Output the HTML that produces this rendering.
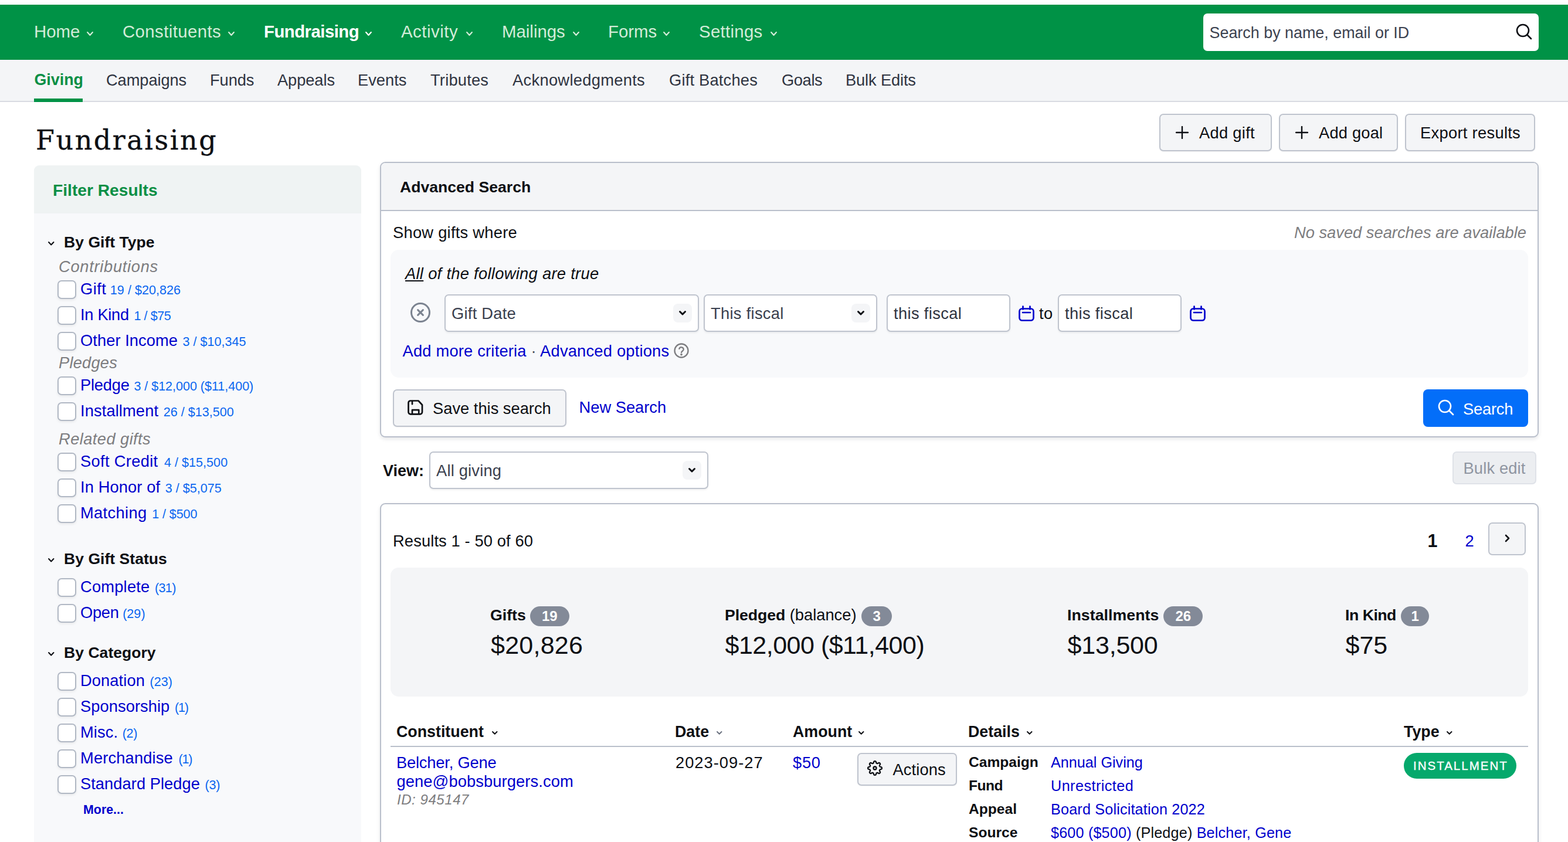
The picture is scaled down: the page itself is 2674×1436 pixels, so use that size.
<!DOCTYPE html>
<html lang="en">
<head>
<meta charset="utf-8">
<title>Fundraising</title>
<style>
*{box-sizing:border-box;margin:0;padding:0}
html,body{width:2674px;height:1436px;overflow:hidden;background:#fff}
body{position:relative;font-family:"Liberation Sans",sans-serif;font-size:27.3px;color:#0d0f14;line-height:1}
a{color:#0000cc;text-decoration:none}
.abs{position:absolute;white-space:nowrap}
svg{display:block}
b{font-size:26.7px}
#topbar{position:absolute;left:0;top:8px;width:2674px;height:94px;background:#009246}
.nav{position:absolute;top:0;height:94px;line-height:92px;font-size:29.4px;color:#d3ecd9;white-space:nowrap}
.nav.b{font-weight:bold;color:#fff}
#gsearch{position:absolute;left:2052px;top:15px;width:572px;height:64px;background:#fff;border-radius:7px}
#gsearch span{position:absolute;left:10.500px;top:0;line-height:66px;font-size:26.9px;color:#3c4250}
#gsearch svg{position:absolute;left:531.500px;top:15.500px}
#subnav{position:absolute;left:0;top:102px;width:2674px;height:72px;background:#f4f5f7;border-bottom:2px solid #d8dbe2}
.sn{position:absolute;top:0;height:70px;line-height:69px;font-size:27.3px;color:#2f3441;white-space:nowrap}
.sn.act{color:#0a8f45;font-weight:bold;font-size:26.8px;margin-left:.5px}
#snline{position:absolute;left:58px;top:66px;width:83px;height:6px;background:#009246}
#title{position:absolute;left:61px;top:207px;font-family:"DejaVu Serif","Liberation Serif",serif;font-size:46px;line-height:64px;color:#0d0f14;letter-spacing:2.55px;-webkit-text-stroke:.35px #0d0f14}
.btn{position:absolute;height:64px;border:2px solid #bfc4ce;border-radius:7px;background:#f4f5f7;color:#0d0f14;font-size:27.3px;line-height:61px;white-space:nowrap;box-shadow:0 1px 2px rgba(0,0,0,.05)}
.btn span{position:absolute;top:0}
#side{position:absolute;left:58px;top:282px;width:558px;height:1200px;background:#f8f9fb;border-radius:9px;overflow:hidden}
#sidehead{position:absolute;left:0;top:0;width:558px;height:82px;background:#eff3f3}
#sidehead span{position:absolute;left:32px;top:0;line-height:84px;font-size:28.2px;font-weight:bold;color:#0a8f45}
.gh{position:absolute;left:109px;font-weight:bold;font-size:26.6px;line-height:40px;white-space:nowrap}
.sub{position:absolute;left:100px;font-style:italic;color:#7d7d80;font-size:27.3px;line-height:40px;white-space:nowrap}
.cb{position:absolute;left:98px;width:32px;height:32px;border:2px solid #b1b8c4;border-radius:7px;background:#fff;box-shadow:0 2px 4px rgba(0,0,0,.07)}
.lb{position:absolute;left:137px;font-size:27.3px;line-height:40px;color:#0000cc;white-space:nowrap}
.lb small{font-size:21.6px;color:#0a66f0}
.panel{position:absolute;left:648px;width:1976px;border:2px solid #b9bfcb;border-radius:9px;background:#fff;box-shadow:0 3px 6px rgba(20,30,50,.10)}
.inp{position:absolute;height:64px;border:2px solid #bfc4ce;border-radius:7px;background:#fff;box-shadow:0 2px 3px rgba(0,0,0,.06);font-size:27.3px;line-height:62px;color:#2f3441;white-space:nowrap}
.inp.sel{color:#3a404e}
.inp span{position:absolute;left:10px;top:0}
.inp i{position:absolute;right:10px;top:14px;width:32px;height:32px;border-radius:8px;background:#f4f5f7}
.inp i svg{position:absolute;left:8px;top:10px}
.badge{display:inline-block;height:34px;line-height:34px;border-radius:17px;background:#838a98;color:#fff;font-weight:bold;font-size:24px;padding:0 20px;vertical-align:-1px;margin-left:-.5px}
  .sum{font-size:43px;line-height:54px;letter-spacing:.5px}
.th{position:absolute;top:1228px;font-weight:bold;font-size:26.8px;line-height:40px;white-space:nowrap}
.dl{position:absolute;left:1652px;font-weight:bold;font-size:24.6px;line-height:40px;white-space:nowrap}
.dv{position:absolute;left:1792px;font-size:25.2px;line-height:40px;white-space:nowrap;letter-spacing:.17px}
</style>
</head>
<body>
<div id="topbar">
<div class="nav" style="left:58px;letter-spacing:0px">Home</div>
<svg class="abs" style="left:146px;top:44px" width="15" height="11" viewBox="0 0 15 11" fill="none" stroke="#d3ecd9" stroke-width="2.2" stroke-linecap="round" stroke-linejoin="round"><path d="M3.1 3.1L7.5 7.9L11.9 3.1"/></svg>
<div class="nav" style="left:209px;letter-spacing:0.4px">Constituents</div>
<svg class="abs" style="left:387px;top:44px" width="15" height="11" viewBox="0 0 15 11" fill="none" stroke="#d3ecd9" stroke-width="2.2" stroke-linecap="round" stroke-linejoin="round"><path d="M3.1 3.1L7.5 7.9L11.9 3.1"/></svg>
<div class="nav b" style="left:450px;letter-spacing:-0.55px">Fundraising</div>
<svg class="abs" style="left:621px;top:44px" width="15" height="11" viewBox="0 0 15 11" fill="none" stroke="#fff" stroke-width="2.2" stroke-linecap="round" stroke-linejoin="round"><path d="M3.1 3.1L7.5 7.9L11.9 3.1"/></svg>
<div class="nav" style="left:684px;letter-spacing:0.5px">Activity</div>
<svg class="abs" style="left:793px;top:44px" width="15" height="11" viewBox="0 0 15 11" fill="none" stroke="#d3ecd9" stroke-width="2.2" stroke-linecap="round" stroke-linejoin="round"><path d="M3.1 3.1L7.5 7.9L11.9 3.1"/></svg>
<div class="nav" style="left:856px;letter-spacing:0px">Mailings</div>
<svg class="abs" style="left:975px;top:44px" width="15" height="11" viewBox="0 0 15 11" fill="none" stroke="#d3ecd9" stroke-width="2.2" stroke-linecap="round" stroke-linejoin="round"><path d="M3.1 3.1L7.5 7.9L11.9 3.1"/></svg>
<div class="nav" style="left:1037px;letter-spacing:0px">Forms</div>
<svg class="abs" style="left:1129px;top:44px" width="15" height="11" viewBox="0 0 15 11" fill="none" stroke="#d3ecd9" stroke-width="2.2" stroke-linecap="round" stroke-linejoin="round"><path d="M3.1 3.1L7.5 7.9L11.9 3.1"/></svg>
<div class="nav" style="left:1192px;letter-spacing:0.3px">Settings</div>
<svg class="abs" style="left:1312px;top:44px" width="15" height="11" viewBox="0 0 15 11" fill="none" stroke="#d3ecd9" stroke-width="2.2" stroke-linecap="round" stroke-linejoin="round"><path d="M3.1 3.1L7.5 7.9L11.9 3.1"/></svg>
<div id="gsearch"><span>Search by name, email or ID</span><svg width="30" height="30" viewBox="0 0 30 30" fill="none" stroke="#0d0f14" stroke-width="2.6" stroke-linecap="round"><circle cx="13" cy="13" r="10"/><path d="M20.500 20.500L27 27"/></svg></div>
</div>
<div id="subnav">
<div class="sn act" style="left:58px;letter-spacing:0px">Giving</div>
<div class="sn" style="left:181px;letter-spacing:-0.1px">Campaigns</div>
<div class="sn" style="left:358px;letter-spacing:-0.1px">Funds</div>
<div class="sn" style="left:473px;letter-spacing:-0.1px">Appeals</div>
<div class="sn" style="left:610px;letter-spacing:0px">Events</div>
<div class="sn" style="left:734px;letter-spacing:0.2px">Tributes</div>
<div class="sn" style="left:874px;letter-spacing:0.3px">Acknowledgments</div>
<div class="sn" style="left:1141px;letter-spacing:0.2px">Gift Batches</div>
<div class="sn" style="left:1333px;letter-spacing:-0.4px">Goals</div>
<div class="sn" style="left:1442px;letter-spacing:-0.15px">Bulk Edits</div>
<div id="snline"></div></div>
<div id="title">Fundraising</div>
<div class="btn" style="left:1977px;top:194px;width:192px"><svg style="position:absolute;left:26px;top:19px" width="22" height="22" viewBox="0 0 22 22" stroke="#0d0f14" stroke-width="2.4" stroke-linecap="round"><path d="M11 1v20M1 11h20"/></svg><span style="left:66px;letter-spacing:.3px">Add gift</span></div>
<div class="btn" style="left:2181px;top:194px;width:203px"><svg style="position:absolute;left:26px;top:19px" width="22" height="22" viewBox="0 0 22 22" stroke="#0d0f14" stroke-width="2.4" stroke-linecap="round"><path d="M11 1v20M1 11h20"/></svg><span style="left:66px;letter-spacing:.2px">Add goal</span></div>
<div class="btn" style="left:2396px;top:194px;width:222px"><span style="left:24px;letter-spacing:.3px">Export results</span></div>
<div id="side"><div id="sidehead"><span>Filter Results</span></div></div>
<svg class="abs" style="left:80px;top:409.5px" width="14.5" height="10.5" viewBox="0 0 14.5 10.5" fill="none" stroke="#0d0f14" stroke-width="2.1" stroke-linecap="round" stroke-linejoin="round"><path d="M3.05 3.05L7.25 7.45L11.45 3.05"/></svg>
<div class="gh" style="top:392.5px">By Gift Type</div>
<div class="sub" style="top:435px;letter-spacing:0.7px">Contributions</div>
<div class="cb" style="top:478px"></div><div class="lb" style="top:473px"><span style="letter-spacing:0.45px">Gift</span> <small style="letter-spacing:0px;margin-left:-1px">19 / $20,826</small></div>
<div class="cb" style="top:522px"></div><div class="lb" style="top:517px"><span style="letter-spacing:-0.3px">In Kind</span> <small style="letter-spacing:-0.45px;margin-left:1px">1 / $75</small></div>
<div class="cb" style="top:566px"></div><div class="lb" style="top:561px"><span style="letter-spacing:0.05px">Other Income</span> <small style="letter-spacing:0px;margin-left:1px">3 / $10,345</small></div>
<div class="sub" style="top:599px;letter-spacing:0.2px">Pledges</div>
<div class="cb" style="top:642px"></div><div class="lb" style="top:637px"><span style="letter-spacing:-0.2px">Pledge</span> <small style="letter-spacing:-0.05px;margin-left:0px">3 / $12,000 ($11,400)</small></div>
<div class="cb" style="top:686px"></div><div class="lb" style="top:681px"><span style="letter-spacing:0.1px">Installment</span> <small style="letter-spacing:0px;margin-left:1px">26 / $13,500</small></div>
<div class="sub" style="top:729px;letter-spacing:0.42px">Related gifts</div>
<div class="cb" style="top:772px"></div><div class="lb" style="top:767px"><span style="letter-spacing:0.32px">Soft Credit</span> <small style="letter-spacing:0px;margin-left:3px">4 / $15,500</small></div>
<div class="cb" style="top:816px"></div><div class="lb" style="top:811px"><span style="letter-spacing:0.1px">In Honor of</span> <small style="letter-spacing:0px;margin-left:1px">3 / $5,075</small></div>
<div class="cb" style="top:860px"></div><div class="lb" style="top:855px"><span style="letter-spacing:0.35px">Matching</span> <small style="letter-spacing:-0.1px;margin-left:1px">1 / $500</small></div>
<svg class="abs" style="left:80px;top:950px" width="14.5" height="10.5" viewBox="0 0 14.5 10.5" fill="none" stroke="#0d0f14" stroke-width="2.1" stroke-linecap="round" stroke-linejoin="round"><path d="M3.05 3.05L7.25 7.45L11.45 3.05"/></svg>
<div class="gh" style="top:933px">By Gift Status</div>
<div class="cb" style="top:986px"></div><div class="lb" style="top:981px"><span style="letter-spacing:0.2px">Complete</span> <small style="letter-spacing:-0.7px;margin-left:1px">(31)</small></div>
<div class="cb" style="top:1030px"></div><div class="lb" style="top:1025px"><span style="letter-spacing:-0.3px">Open</span> <small style="letter-spacing:0px;margin-left:-1px">(29)</small></div>
<svg class="abs" style="left:80px;top:1110px" width="14.5" height="10.5" viewBox="0 0 14.5 10.5" fill="none" stroke="#0d0f14" stroke-width="2.1" stroke-linecap="round" stroke-linejoin="round"><path d="M3.05 3.05L7.25 7.45L11.45 3.05"/></svg>
<div class="gh" style="top:1093px">By Category</div>
<div class="cb" style="top:1146px"></div><div class="lb" style="top:1141px"><span style="letter-spacing:0.08px">Donation</span> <small style="letter-spacing:0px;margin-left:1px">(23)</small></div>
<div class="cb" style="top:1190px"></div><div class="lb" style="top:1185px"><span style="letter-spacing:0.05px">Sponsorship</span> <small style="letter-spacing:-1.2px;margin-left:1px">(1)</small></div>
<div class="cb" style="top:1234px"></div><div class="lb" style="top:1229px"><span style="letter-spacing:0.1px">Misc.</span> <small style="letter-spacing:-0.4px;margin-left:0px">(2)</small></div>
<div class="cb" style="top:1278px"></div><div class="lb" style="top:1273px"><span style="letter-spacing:0.15px">Merchandise</span> <small style="letter-spacing:-1.2px;margin-left:2px">(1)</small></div>
<div class="cb" style="top:1322px"></div><div class="lb" style="top:1317px"><span style="letter-spacing:0.04px">Standard Pledge</span> <small style="letter-spacing:-0.2px;margin-left:1px">(3)</small></div>
<div class="abs" style="left:142px;top:1361px;font-weight:bold;font-size:21.4px;line-height:40px;color:#0000cc">More...</div>
<div class="panel" style="top:276px;height:470px"></div>
<div class="abs" style="left:650px;top:278px;width:1972px;height:82px;background:#f4f5f7;border-radius:7px 7px 0 0;border-bottom:2px solid #b9bfcb"></div>
<div class="abs" style="left:682px;top:299px;font-weight:bold;font-size:26.6px;line-height:40px">Advanced Search</div>
<div class="abs" style="left:670px;top:377px;line-height:40px;letter-spacing:.26px">Show gifts where</div>
<div class="abs" style="right:71px;top:377px;line-height:40px;font-style:italic;color:#7d7d80">No saved searches are available</div>
<div class="abs" style="left:666px;top:426px;width:1940px;height:218px;background:#f8f9fb;border-radius:14px"></div>
<div class="abs" style="left:691px;top:447px;line-height:40px;font-style:italic;letter-spacing:.3px"><u>All</u> of the following are true</div>
<svg class="abs" style="left:699px;top:515px" width="36" height="36" viewBox="0 0 36 36" fill="none" stroke="#7b8390" stroke-width="3" stroke-linecap="round"><circle cx="18" cy="18" r="15.500"/><path d="M13.600 13.600l8.800 8.800M22.400 13.600l-8.800 8.800"/></svg>
<div class="inp sel" style="left:758px;top:502px;width:434px"><span style="letter-spacing:.25px">Gift Date</span><i><svg width="16" height="12" viewBox="0 0 16 12" fill="none" stroke="#0d0f14" stroke-width="3" stroke-linecap="round" stroke-linejoin="round"><path d="M3.500 3.500L8 8l4.500-4.500"/></svg></i></div>
<div class="inp sel" style="left:1200px;top:502px;width:296px"><span style="letter-spacing:.3px">This fiscal</span><i><svg width="16" height="12" viewBox="0 0 16 12" fill="none" stroke="#0d0f14" stroke-width="3" stroke-linecap="round" stroke-linejoin="round"><path d="M3.500 3.500L8 8l4.500-4.500"/></svg></i></div>
<div class="inp" style="left:1512px;top:502px;width:211px"><span style="letter-spacing:.35px">this fiscal</span></div>
<svg class="abs" style="left:1737px;top:521px" width="27" height="27" viewBox="0 0 27 27" fill="none" stroke="#0000cc" stroke-width="2.700" stroke-linecap="round" stroke-linejoin="round"><rect x="1.500" y="5.500" width="24" height="20" rx="4.500"/><path d="M7 12h13M7.500 1.500v5M19.500 1.500v5"/></svg>
<div class="abs" style="left:1772px;top:515px;line-height:40px;letter-spacing:.5px">to</div>
<div class="inp" style="left:1804px;top:502px;width:211px"><span style="letter-spacing:.35px">this fiscal</span></div>
<svg class="abs" style="left:2029px;top:521px" width="27" height="27" viewBox="0 0 27 27" fill="none" stroke="#0000cc" stroke-width="2.700" stroke-linecap="round" stroke-linejoin="round"><rect x="1.500" y="5.500" width="24" height="20" rx="4.500"/><path d="M7 12h13M7.500 1.500v5M19.500 1.500v5"/></svg>
<div class="abs" style="left:686.500px;top:579px;line-height:40px;color:#0000cc;letter-spacing:.2px">Add more criteria <span style="color:#474d5c">·</span> Advanced options</div>
<svg class="abs" style="left:1148.500px;top:585px" width="26" height="26" viewBox="0 0 26 26" fill="none" stroke="#7d7d80" stroke-width="2.300" stroke-linecap="round" stroke-linejoin="round"><circle cx="13" cy="13" r="11.500"/><path d="M9.300 9.800a3.800 3.800 0 0 1 7.400 1.200c0 2.500-3.700 3-3.700 5.200"/><circle cx="13" cy="19.600" r=".7" fill="#7d7d80"/></svg>
<div class="btn" style="left:670px;top:664px;width:296px"><svg style="position:absolute;left:23px;top:15.500px" width="28" height="28" viewBox="0 0 28 28" fill="none" stroke="#0d0f14" stroke-width="2.700" stroke-linecap="round" stroke-linejoin="round"><path d="M5.500 1.500H18.500L25 8.500V20.800a3.500 3.500 0 0 1-3.500 3.500H5a3.500 3.500 0 0 1-3.500-3.500V5a3.500 3.500 0 0 1 3.500-3.500z"/><path d="M8 2v5.200M8 24v-6.800h11.200V24"/></svg><span style="left:66px">Save this search</span></div>
<div class="abs" style="left:987.500px;top:675px;line-height:40px;color:#0000cc">New Search</div>
<div class="abs" style="left:2427px;top:664px;width:179px;height:64px;border-radius:8px;background:#036ef9"></div>
<svg class="abs" style="left:2450.500px;top:679.500px" width="30" height="30" viewBox="0 0 30 30" fill="none" stroke="#fff" stroke-width="2.600" stroke-linecap="round"><circle cx="13" cy="13" r="10"/><path d="M20.500 20.500L27 27"/></svg>
<div class="abs" style="left:2495px;top:677.500px;line-height:40px;color:#fff;letter-spacing:-.2px">Search</div>
<div class="abs" style="left:653px;top:783px;line-height:40px;font-weight:bold;font-size:27px">View:</div>
<div class="inp sel" style="left:732px;top:770px;width:476px"><span style="letter-spacing:.2px">All giving</span><i><svg width="16" height="12" viewBox="0 0 16 12" fill="none" stroke="#0d0f14" stroke-width="3" stroke-linecap="round" stroke-linejoin="round"><path d="M3.500 3.500L8 8l4.500-4.500"/></svg></i></div>
<div class="abs" style="left:2477px;top:770px;width:143px;height:56px;border:2px solid #dfe2e8;border-radius:7px;background:#eceef1"></div>
<div class="abs" style="left:2495.500px;top:779px;line-height:40px;color:#8f95a1;letter-spacing:.15px">Bulk edit</div>
<div class="panel" style="top:858px;height:640px"></div>
<div class="abs" style="left:670px;top:903px;line-height:40px;letter-spacing:.12px">Results 1 - 50 of 60</div>
<div class="abs" style="left:2434.500px;top:900px;line-height:44px;font-weight:bold;font-size:30.500px">1</div>
<div class="abs" style="left:2498.500px;top:903px;line-height:40px;color:#0000cc">2</div>
<div class="abs" style="left:2538px;top:891px;width:64px;height:56px;border:2px solid #bfc4ce;border-radius:7px;background:#f4f5f7"></div>
<svg class="abs" style="left:2564.500px;top:909.500px" width="12" height="16" viewBox="0 0 12 16" fill="none" stroke="#0d0f14" stroke-width="2.600" stroke-linecap="round" stroke-linejoin="round"><path d="M3 3l5 5-5 5"/></svg>
<div class="abs" style="left:666px;top:968px;width:1940px;height:220px;background:#f4f5f7;border-radius:14px"></div>
<div class="abs" style="left:836px;top:1029px;line-height:40px"><b style="letter-spacing:0px">Gifts</b> <span class="badge" style="padding:0 20px;margin-left:-0.5px">19</span></div>
<div class="abs sum" style="left:837px;top:1073px;letter-spacing:0.25px">$20,826</div>
<div class="abs" style="left:1236px;top:1029px;line-height:40px"><b style="letter-spacing:-0.1px">Pledged</b> (balance) <span class="badge" style="padding:0 19.5px;margin-left:1px">3</span></div>
<div class="abs sum" style="left:1236.5px;top:1073px;letter-spacing:-0.5px">$12,000 ($11,400)</div>
<div class="abs" style="left:1820px;top:1029px;line-height:40px"><b style="letter-spacing:0.05px">Installments</b> <span class="badge" style="padding:0 20px;margin-left:0.5px">26</span></div>
<div class="abs sum" style="left:1820.5px;top:1073px;letter-spacing:-0.2px">$13,500</div>
<div class="abs" style="left:2294px;top:1029px;line-height:40px"><b style="letter-spacing:-0.5px">In Kind</b> <span class="badge" style="padding:0 17.4px;margin-left:0.5px">1</span></div>
<div class="abs sum" style="left:2294.5px;top:1073px;letter-spacing:0px">$75</div>
<div class="th" style="left:676px">Constituent</div>
<svg class="abs" style="left:837px;top:1245px" width="13.5" height="9.8" viewBox="0 0 13.5 9.8" fill="none" stroke="#0d0f14" stroke-width="2" stroke-linecap="round" stroke-linejoin="round"><path d="M3.0 3.0L6.75 6.8L10.5 3.0"/></svg>
<div class="th" style="left:1151px">Date</div>
<svg class="abs" style="left:1220px;top:1245px" width="13.5" height="9.8" viewBox="0 0 13.5 9.8" fill="none" stroke="#6b7280" stroke-width="2" stroke-linecap="round" stroke-linejoin="round"><path d="M3.0 3.0L6.75 6.8L10.5 3.0"/></svg>
<div class="th" style="left:1352px">Amount</div>
<svg class="abs" style="left:1462px;top:1245px" width="13.5" height="9.8" viewBox="0 0 13.5 9.8" fill="none" stroke="#0d0f14" stroke-width="2" stroke-linecap="round" stroke-linejoin="round"><path d="M3.0 3.0L6.75 6.8L10.5 3.0"/></svg>
<div class="th" style="left:1651px">Details</div>
<svg class="abs" style="left:1749px;top:1245px" width="13.5" height="9.8" viewBox="0 0 13.5 9.8" fill="none" stroke="#0d0f14" stroke-width="2" stroke-linecap="round" stroke-linejoin="round"><path d="M3.0 3.0L6.75 6.8L10.5 3.0"/></svg>
<div class="th" style="left:2394px">Type</div>
<svg class="abs" style="left:2465px;top:1245px" width="13.5" height="9.8" viewBox="0 0 13.5 9.8" fill="none" stroke="#0d0f14" stroke-width="2" stroke-linecap="round" stroke-linejoin="round"><path d="M3.0 3.0L6.75 6.8L10.5 3.0"/></svg>
<div class="abs" style="left:666px;top:1272px;width:1940px;height:2px;background:#b9bfcb"></div>
<div class="abs" style="left:676px;top:1281px;line-height:40px;color:#0000cc;letter-spacing:-.2px">Belcher, Gene</div>
<div class="abs" style="left:676.500px;top:1313px;line-height:40px;color:#0000cc;letter-spacing:.1px">gene@bobsburgers.com</div>
<div class="abs" style="left:677px;top:1344px;line-height:40px;font-style:italic;color:#7d7d80;font-size:24px;letter-spacing:.55px">ID: 945147</div>
<div class="abs" style="left:1152px;top:1281px;line-height:40px;letter-spacing:1px">2023-09-27</div>
<div class="abs" style="left:1352px;top:1281px;line-height:40px;color:#0000cc;letter-spacing:.7px">$50</div>
<div class="btn" style="left:1462px;top:1284px;width:170px;height:56px;line-height:54px"><svg style="position:absolute;left:14.300px;top:9.700px" width="28" height="28" viewBox="0 0 28 28" fill="none" stroke="#0d0f14" stroke-width="2.300" stroke-linecap="round" stroke-linejoin="round"><circle cx="14" cy="14" r="2.500"/><path d="M14.00 2.15 L14.46 2.18 L14.92 2.27 L15.36 2.50 L15.74 3.01 L16.01 3.90 L16.21 4.79 L16.45 5.32 L16.73 5.60 L17.03 5.78 L17.35 5.92 L17.67 6.04 L18.01 6.13 L18.40 6.13 L18.95 5.92 L19.72 5.44 L20.54 5.00 L21.17 4.90 L21.64 5.05 L22.03 5.31 L22.38 5.62 L22.69 5.97 L22.95 6.36 L23.10 6.83 L23.00 7.46 L22.56 8.28 L22.08 9.05 L21.87 9.60 L21.87 9.99 L21.96 10.33 L22.08 10.65 L22.22 10.97 L22.40 11.27 L22.68 11.55 L23.21 11.79 L24.10 11.99 L24.99 12.26 L25.50 12.64 L25.73 13.08 L25.82 13.54 L25.85 14.00 L25.82 14.46 L25.73 14.92 L25.50 15.36 L24.99 15.74 L24.10 16.01 L23.21 16.21 L22.68 16.45 L22.40 16.73 L22.22 17.03 L22.08 17.35 L21.96 17.67 L21.87 18.01 L21.87 18.40 L22.08 18.95 L22.56 19.72 L23.00 20.54 L23.10 21.17 L22.95 21.64 L22.69 22.03 L22.38 22.38 L22.03 22.69 L21.64 22.95 L21.17 23.10 L20.54 23.00 L19.72 22.56 L18.95 22.08 L18.40 21.87 L18.01 21.87 L17.67 21.96 L17.35 22.08 L17.03 22.22 L16.73 22.40 L16.45 22.68 L16.21 23.21 L16.01 24.10 L15.74 24.99 L15.36 25.50 L14.92 25.73 L14.46 25.82 L14.00 25.85 L13.54 25.82 L13.08 25.73 L12.64 25.50 L12.26 24.99 L11.99 24.10 L11.79 23.21 L11.55 22.68 L11.27 22.40 L10.97 22.22 L10.65 22.08 L10.33 21.96 L9.99 21.87 L9.60 21.87 L9.05 22.08 L8.28 22.56 L7.46 23.00 L6.83 23.10 L6.36 22.95 L5.97 22.69 L5.62 22.38 L5.31 22.03 L5.05 21.64 L4.90 21.17 L5.00 20.54 L5.44 19.72 L5.92 18.95 L6.13 18.40 L6.13 18.01 L6.04 17.67 L5.92 17.35 L5.78 17.03 L5.60 16.73 L5.32 16.45 L4.79 16.21 L3.90 16.01 L3.01 15.74 L2.50 15.36 L2.27 14.92 L2.18 14.46 L2.15 14.00 L2.18 13.54 L2.27 13.08 L2.50 12.64 L3.01 12.26 L3.90 11.99 L4.79 11.79 L5.32 11.55 L5.60 11.27 L5.78 10.97 L5.92 10.65 L6.04 10.33 L6.13 9.99 L6.13 9.60 L5.92 9.05 L5.44 8.28 L5.00 7.46 L4.90 6.83 L5.05 6.36 L5.31 5.97 L5.62 5.62 L5.97 5.31 L6.36 5.05 L6.83 4.90 L7.46 5.00 L8.28 5.44 L9.05 5.92 L9.60 6.13 L9.99 6.13 L10.33 6.04 L10.65 5.92 L10.97 5.78 L11.27 5.60 L11.55 5.32 L11.79 4.79 L11.99 3.90 L12.26 3.01 L12.64 2.50 L13.08 2.27 L13.54 2.18z"/></svg><span style="left:58.500px;letter-spacing:.1px">Actions</span></div>
<div class="dl" style="top:1279.5px">Campaign</div><div class="dv" style="top:1279.5px"><a style="letter-spacing:0">Annual Giving</a></div>
<div class="dl" style="top:1319.5px"><span style="letter-spacing:-.5px">Fund</span></div><div class="dv" style="top:1319.5px"><a style="letter-spacing:.45px">Unrestricted</a></div>
<div class="dl" style="top:1359.5px">Appeal</div><div class="dv" style="top:1359.5px"><a>Board Solicitation 2022</a></div>
<div class="dl" style="top:1399.5px">Source</div><div class="dv" style="top:1399.5px"><a>$600 ($500)</a> (Pledge) <a>Belcher, Gene</a></div>
<div class="abs" style="left:2394px;top:1284px;width:192px;height:44px;border-radius:22px;background:#05a96c"></div>
<div class="abs" style="left:2410px;top:1286px;line-height:40px;color:#fff;font-size:20.500px;letter-spacing:2px;-webkit-text-stroke:.35px #fff">INSTALLMENT</div>
</body>
</html>
